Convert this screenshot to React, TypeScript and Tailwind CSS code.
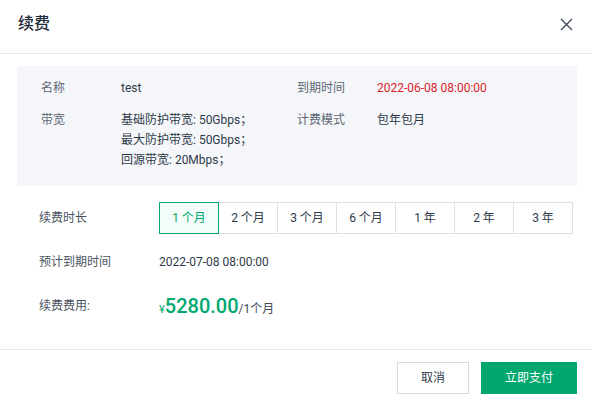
import React from 'react';

const durations = ['1 个月', '2 个月', '3 个月', '6 个月', '1 年', '2 年', '3 年'];

const InfoItem: React.FC<{ label: string; children: React.ReactNode; wide?: boolean }> = ({
  label,
  children,
  wide,
}) => (
  <div className={`flex ${wide ? 'w-[256px]' : ''}`}>
    <div className="w-[80px] shrink-0 text-[#5e6775]">{label}</div>
    <div className="text-[#2e3a4a]">{children}</div>
  </div>
);

const App: React.FC = () => {
  const [active, setActive] = React.useState(0);

  return (
    <div className="w-[592px] h-[404px] bg-white text-[12px] leading-5 font-['Roboto','Noto_Sans_CJK_SC',sans-serif]">
      <div className="h-[54px] border-b border-[#e4e7ec] flex items-center justify-between pl-[18px] pr-[19px] pb-[5px]">
        <div className="text-[16px] text-[#1f2b3a] font-medium">续费</div>
        <svg width="13" height="13" viewBox="0 0 13 13" className="text-[#3d4a5a]">
          <path d="M1 1 L12 12 M12 1 L1 12" stroke="currentColor" strokeWidth="1.4" fill="none" />
        </svg>
      </div>

      <div className="h-[295px] pt-3">
        <div className="ml-[17px] w-[560px] bg-[#f4f6f9] pt-3 pb-4 pl-6 flex flex-col gap-3">
          <div className="flex">
            <InfoItem label="名称" wide>test</InfoItem>
            <InfoItem label="到期时间">
              <span className="text-[#d9222a]">2022-06-08 08:00:00</span>
            </InfoItem>
          </div>
          <div className="flex">
            <InfoItem label="带宽" wide>
              <div>基础防护带宽: 50Gbps；</div>
              <div>最大防护带宽: 50Gbps；</div>
              <div>回源带宽: 20Mbps；</div>
            </InfoItem>
            <InfoItem label="计费模式">包年包月</InfoItem>
          </div>
        </div>

        <div className="pl-[39px]">
          <div className="mt-4 flex items-center h-8">
            <div className="w-[120px] text-[#4a5360]">续费时长</div>
            <div className="flex">
              {durations.map((d, i) => (
                <button
                  key={d}
                  onClick={() => setActive(i)}
                  className={`w-[60px] h-8 border -ml-px first:ml-0 ${
                    i === active
                      ? 'relative z-10 border-[#00a870] bg-[#f3fcf8] text-[#00a870]'
                      : 'border-[#dcdfe5] text-[#2e3a4a]'
                  }`}
                >
                  {d}
                </button>
              ))}
            </div>
          </div>

          <div className="mt-[18px] flex items-center h-5">
            <div className="w-[120px] text-[#4a5360]">预计到期时间</div>
            <div className="text-[#2e3a4a]">2022-07-08 08:00:00</div>
          </div>

          <div className="mt-5 flex items-center h-7">
            <div className="w-[120px] text-[#4a5360]">续费费用:</div>
            <div className="flex items-baseline text-[#00a870]">
              <span className="text-[11px]">¥</span>
              <span className="text-[20px] leading-7 font-medium">5280.00</span>
              <span className="text-[12px] text-[#3d4a5a]">/1个月</span>
            </div>
          </div>
        </div>
      </div>

      <div className="border-t border-[#e4e7ec] pt-3 pr-[15px] flex justify-end gap-3">
        <button className="w-[72px] h-8 border border-[#d5dbe3] text-[#2e3a4a] bg-white">取消</button>
        <button className="w-[96px] h-8 bg-[#00a870] text-white">立即支付</button>
      </div>
    </div>
  );
};

export default App;
